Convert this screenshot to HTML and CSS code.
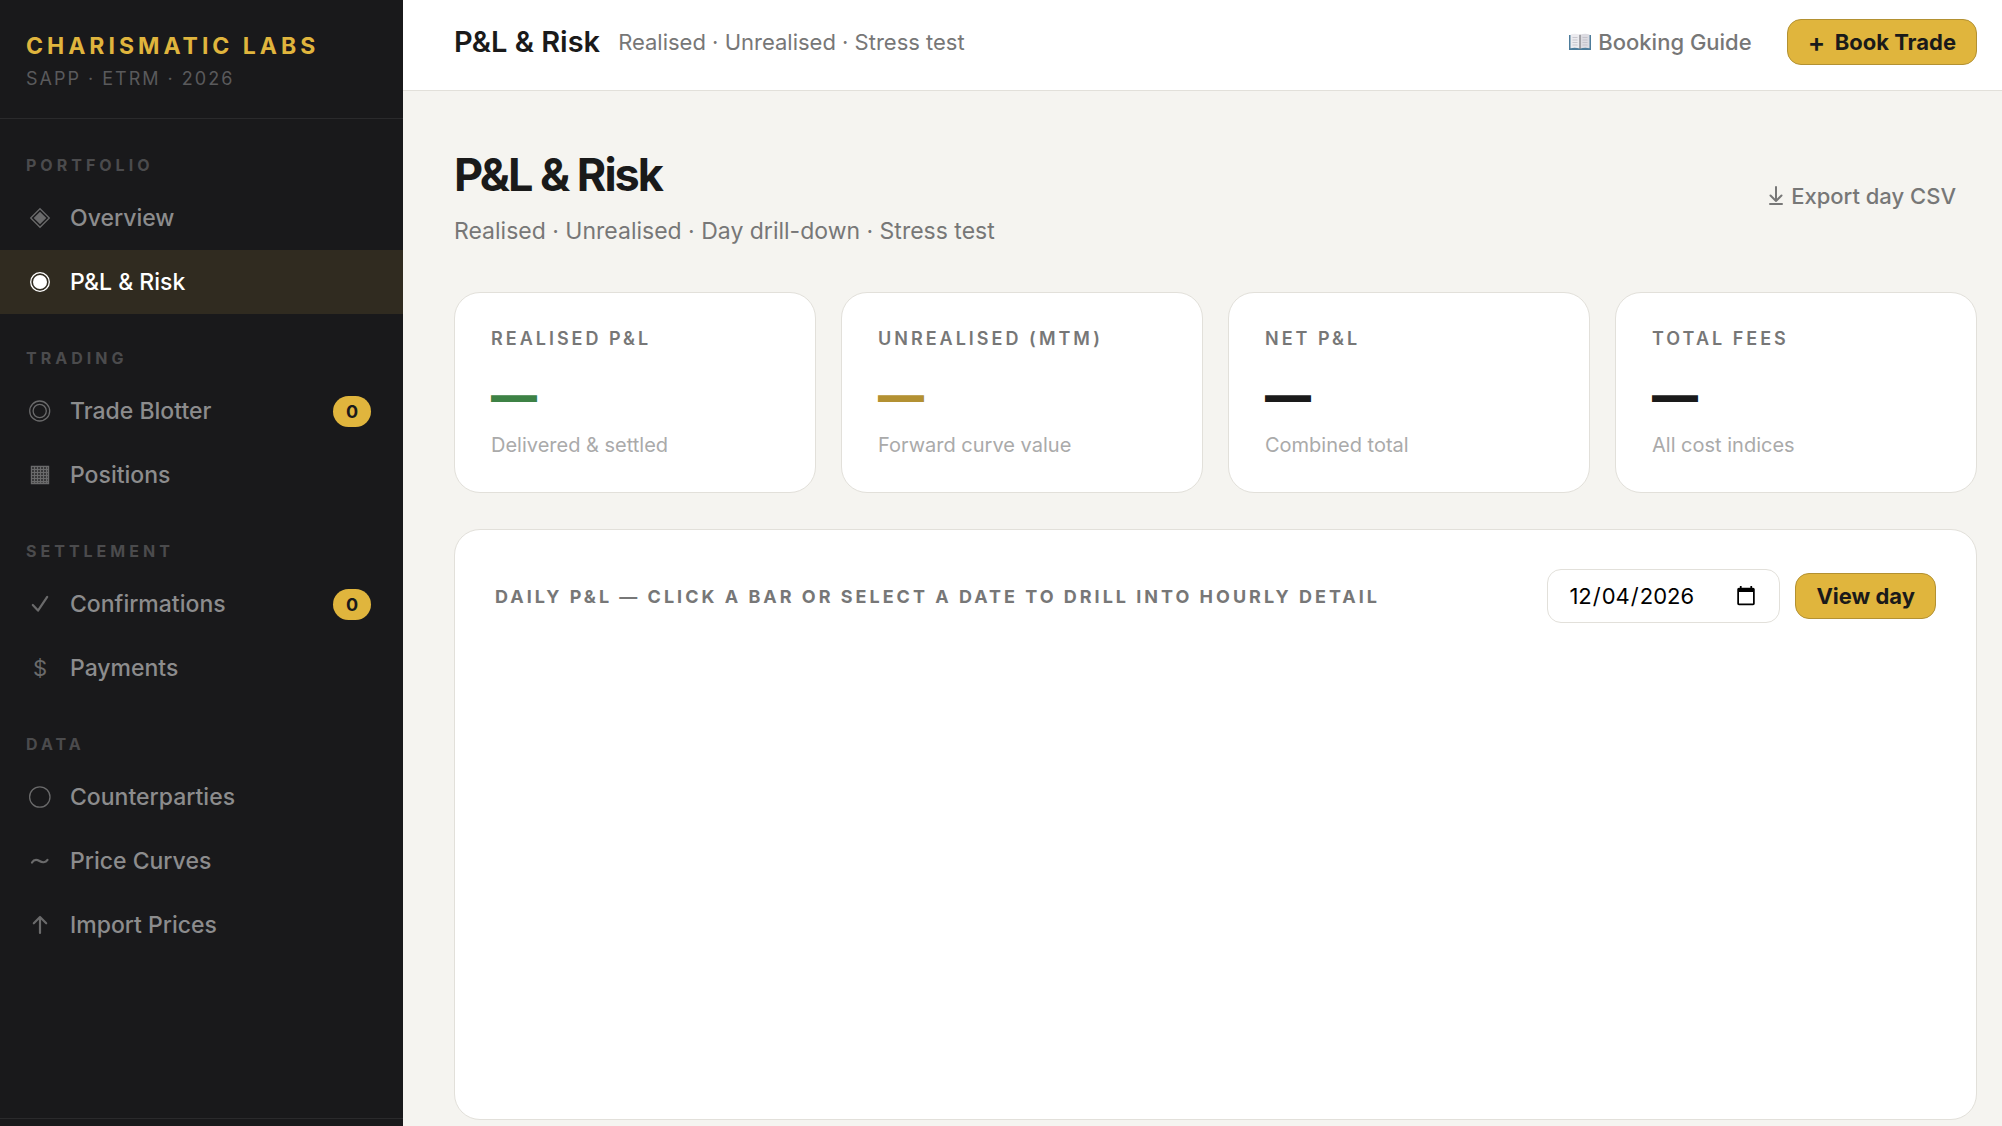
FILE: index.html
```
<!DOCTYPE html>
<html lang="en">
<head>
<meta charset="utf-8">
<meta name="viewport" content="width=device-width, initial-scale=1">
<title>P&amp;L &amp; Risk</title>
<link rel="stylesheet" href="styles.css">
</head>
<body>

<aside class="sidebar">
  <div class="brand">
    <div class="brand-name">CHARISMATIC LABS</div>
    <div class="brand-sub">SAPP · ETRM · 2026</div>
  </div>

  <nav class="nav">
    <div class="nav-label">PORTFOLIO</div>
    <a class="nav-item" href="#overview">
      <svg class="nav-icon" viewBox="0 0 28 28"><path d="M14 4.700 23.300 14 14 23.300 4.700 14z" fill="none" stroke="currentColor" stroke-width="1.300"/><path d="M14 7.700 20.300 14 14 20.300 7.700 14z" fill="currentColor"/></svg>
      <span>Overview</span>
    </a>
    <a class="nav-item active" href="#pnl">
      <svg class="nav-icon" viewBox="0 0 28 28"><circle cx="14" cy="14" r="9.300" fill="none" stroke="currentColor" stroke-width="1.300"/><circle cx="14" cy="14" r="7" fill="currentColor"/></svg>
      <span>P&amp;L &amp; Risk</span>
    </a>

    <div class="nav-label">TRADING</div>
    <a class="nav-item" href="#blotter">
      <svg class="nav-icon" viewBox="0 0 28 28"><g fill="none" stroke="currentColor" stroke-width="1.300"><circle cx="13.700" cy="14" r="10"/><circle cx="13.700" cy="14" r="6.600"/></g></svg>
      <span>Trade Blotter</span>
      <span class="badge">0</span>
    </a>
    <a class="nav-item" href="#positions">
      <svg class="nav-icon" viewBox="0 0 28 28"><path d="M5.500 5.500h17v17h-17zM8.500 5.500v17M11.500 5.500v17M14.500 5.500v17M17.500 5.500v17M20.500 5.500v17M5.500 8.500h17M5.500 11.500h17M5.500 14.500h17M5.500 17.500h17M5.500 20.500h17" fill="none" stroke="currentColor" stroke-width="1.400"/></svg>
      <span>Positions</span>
    </a>

    <div class="nav-label">SETTLEMENT</div>
    <a class="nav-item" href="#confirmations">
      <svg class="nav-icon" viewBox="0 0 28 28"><path d="M6.800 15 12 20.600 21.200 6.800" fill="none" stroke="currentColor" stroke-width="2.200" stroke-linecap="round" stroke-linejoin="round"/></svg>
      <span>Confirmations</span>
      <span class="badge">0</span>
    </a>
    <a class="nav-item" href="#payments">
      <span class="nav-icon">$</span>
      <span>Payments</span>
    </a>

    <div class="nav-label">DATA</div>
    <a class="nav-item" href="#counterparties">
      <svg class="nav-icon" viewBox="0 0 28 28"><circle cx="13.800" cy="14" r="10.200" fill="none" stroke="currentColor" stroke-width="1.300"/></svg>
      <span>Counterparties</span>
    </a>
    <a class="nav-item" href="#curves">
      <svg class="nav-icon" viewBox="0 0 28 28"><path d="M6 15.500C8 12.300 11 12.500 13.500 14S19.500 15.800 21.500 12.800" fill="none" stroke="currentColor" stroke-width="2.200" stroke-linecap="round"/></svg>
      <span>Price Curves</span>
    </a>
    <a class="nav-item" href="#import">
      <svg class="nav-icon" viewBox="0 0 28 28"><path d="M14 22V6M7.800 12.300 14 6l6.200 6.300" fill="none" stroke="currentColor" stroke-width="2.200" stroke-linecap="round" stroke-linejoin="round"/></svg>
      <span>Import Prices</span>
    </a>
  </nav>

  <div class="sidebar-foot"></div>
</aside>

<div class="main">
  <header class="topbar">
    <div class="topbar-title">P&amp;L &amp; Risk</div>
    <div class="topbar-sub">Realised · Unrealised · Stress test</div>
    <div class="topbar-actions">
      <button type="button" class="btn btn-ghost">
        <svg class="book" viewBox="0 0 22 18"><path d="M0 2h22v15H0z" fill="#4d7c9b"/><path d="M1.500 1.500Q6 0 11 1.800V15.500Q6 14 1.500 15.200z" fill="#ecebef"/><path d="M20.500 1.500Q16 0 11 1.800V15.500Q16 14 20.500 15.200z" fill="#dddce2"/><path d="M11 1.800V16" stroke="#77777d" stroke-width="1.200"/><path d="M3.500 4.500h5M3.500 7h5M3.500 9.500h5M3.500 12h5M13.500 4.500h5M13.500 7h5M13.500 9.500h5M13.500 12h5" stroke="#b9b8c2" stroke-width=".7"/></svg>
        Booking Guide
      </button>
      <button type="button" class="btn btn-gold"><span class="plus">+</span>Book Trade</button>
    </div>
  </header>

  <main class="content">
    <div class="page-head">
      <div>
        <h1>P&amp;L &amp; Risk</h1>
        <p>Realised · Unrealised · Day drill-down · Stress test</p>
      </div>
      <button type="button" class="btn btn-ghost">
        <svg class="download" viewBox="0 0 14 20"><path d="M7 1v14M1.500 9.500 7 15l5.500-5.500M1 18h12" fill="none" stroke="currentColor" stroke-width="2" stroke-linecap="round" stroke-linejoin="round"/></svg>
        Export day CSV
      </button>
    </div>

    <section class="kpis">
      <div class="card kpi">
        <div class="kpi-label">REALISED P&amp;L</div>
        <div class="kpi-value green">—</div>
        <div class="kpi-note">Delivered &amp; settled</div>
      </div>
      <div class="card kpi">
        <div class="kpi-label">UNREALISED (MTM)</div>
        <div class="kpi-value gold">—</div>
        <div class="kpi-note">Forward curve value</div>
      </div>
      <div class="card kpi">
        <div class="kpi-label">NET P&amp;L</div>
        <div class="kpi-value">—</div>
        <div class="kpi-note">Combined total</div>
      </div>
      <div class="card kpi">
        <div class="kpi-label">TOTAL FEES</div>
        <div class="kpi-value">—</div>
        <div class="kpi-note">All cost indices</div>
      </div>
    </section>

    <section class="card chart-card">
      <div class="chart-head">
        <label class="chart-title" for="dayPick">DAILY P&amp;L — CLICK A BAR OR SELECT A DATE TO DRILL INTO HOURLY DETAIL</label>
        <div class="chart-tools">
          <input type="date" id="dayPick" class="date-input" value="2026-12-04">
          <button type="button" class="btn btn-gold">View day</button>
        </div>
      </div>
      <div class="chart" id="dailyChart"></div>
    </section>
  </main>
</div>

</body>
</html>
```
FILE: styles.css
```
:root {
  --dark: #19191b;
  --ink: #1a1a1a;
  --muted: #777777;
  --faint: #aaaaaa;
  --gold: #e0b53d;
  --gold-dark: #b39132;
  --green: #3d8245;
  --line: #e2e0da;
  --bg: #f5f4f0;
}

* {
  box-sizing: border-box;
}

body {
  margin: 0;
  display: flex;
  height: 100vh;
  overflow: hidden;
  background: var(--bg);
  color: var(--ink);
  font-family: Inter, "Liberation Sans", sans-serif;
  font-size: 23px;
}

/* sidebar */
.sidebar {
  width: 403px;
  flex-shrink: 0;
  display: flex;
  flex-direction: column;
  background: var(--dark);
}

.brand {
  padding: 32px 26px 25px;
  border-bottom: 1px solid #2a2a2c;
}
.brand-name {
  font-size: 23px;
  line-height: 28px;
  font-weight: 700;
  letter-spacing: 4px;
  color: var(--gold);
}
.brand-sub {
  margin-top: 5px;
  font-size: 18px;
  line-height: 28px;
  letter-spacing: 2px;
  color: #5a5a5c;
}

.nav {
  flex: 1;
  padding-top: 2px;
}
.nav-label {
  padding: 34px 26px 11px;
  font-size: 16px;
  line-height: 20px;
  font-weight: 700;
  letter-spacing: 4px;
  color: #4b4b4d;
}
.nav-item {
  display: flex;
  align-items: center;
  gap: 16px;
  height: 64px;
  padding: 0 32px 0 26px;
  color: #8c8c8d;
  font-weight: 500;
  text-decoration: none;
}
.nav-icon {
  width: 28px;
  height: 28px;
  line-height: 28px;
  font-size: 22px;
  font-weight: 400;
  text-align: center;
  color: #6a6a6b;
}
.nav-item.active {
  background: #302b20;
  color: #fff;
}
.nav-item.active .nav-icon {
  color: #fff;
}
.badge {
  margin-left: auto;
  width: 38px;
  border-radius: 16px;
  background: var(--gold);
  color: var(--dark);
  font-size: 18px;
  line-height: 31px;
  font-weight: 700;
  text-align: center;
}
.sidebar-foot {
  height: 8px;
  border-top: 1px solid #2a2a2c;
}

/* top bar */
.main {
  flex: 1;
  min-width: 0;
}
.topbar {
  display: flex;
  align-items: center;
  padding: 19px 25px 25px 51px;
  background: #fff;
  border-bottom: 1px solid var(--line);
}
.topbar-title {
  font-size: 29px;
  line-height: 36px;
  font-weight: 600;
}
.topbar-sub {
  margin-left: 18px;
  font-size: 22px;
  color: var(--muted);
}
.topbar-actions {
  display: flex;
  align-items: center;
  gap: 14px;
  margin-left: auto;
}

.btn {
  display: flex;
  align-items: center;
  height: 46px;
  padding: 0 20px;
  border: 1px solid transparent;
  border-radius: 14px;
  background: none;
  font-family: inherit;
  font-size: 22px;
  font-weight: 500;
  color: var(--muted);
  cursor: pointer;
}
.btn-gold {
  background: var(--gold);
  border-color: var(--gold-dark);
  color: var(--ink);
  font-weight: 700;
}
.plus {
  width: 27px;
  font-size: 26px;
  font-weight: 600;
  text-align: left;
}
.book {
  width: 22px;
  height: 18px;
  margin-right: 7px;
}
.download {
  width: 14px;
  height: 20px;
  margin-right: 8px;
}

/* page */
.content {
  padding: 58px 25px 0 51px;
}
.page-head {
  display: flex;
  justify-content: space-between;
  align-items: center;
  margin-bottom: 49px;
}
h1 {
  margin: 0;
  font-size: 45px;
  line-height: 52px;
  font-weight: 700;
  letter-spacing: -2px;
}
.page-head p {
  margin: 18px 0 0;
  line-height: 24px;
  color: var(--muted);
}

.card {
  background: #fff;
  border: 1px solid var(--line);
  border-radius: 26px;
}
.kpis {
  display: grid;
  grid-template-columns: repeat(4, 1fr);
  gap: 25px;
  margin-bottom: 36px;
}
.kpi {
  padding: 34px 36px 33px;
}
.kpi-label {
  font-size: 18px;
  line-height: 24px;
  font-weight: 600;
  letter-spacing: 3px;
  color: var(--muted);
}
.kpi-value {
  margin: 21px 0 13px;
  font-size: 46px;
  line-height: 46px;
  font-weight: 900;
}
.kpi-note {
  font-size: 20px;
  line-height: 28px;
  color: var(--faint);
}
.green {
  color: var(--green);
}
.gold {
  color: var(--gold-dark);
}

.chart-card {
  padding: 39px 40px;
}
.chart-head {
  display: flex;
  justify-content: space-between;
  align-items: center;
}
.chart-title {
  font-size: 18px;
  font-weight: 700;
  letter-spacing: 3px;
  color: var(--muted);
}
.chart-tools {
  display: flex;
  align-items: center;
  gap: 15px;
}
.date-input {
  width: 233px;
  height: 54px;
  padding: 0 20px;
  border: 1px solid var(--line);
  border-radius: 14px;
  background: #fff;
  color: #000;
  font-family: inherit;
  font-size: 22px;
}
.chart {
  height: 457px;
}
```
